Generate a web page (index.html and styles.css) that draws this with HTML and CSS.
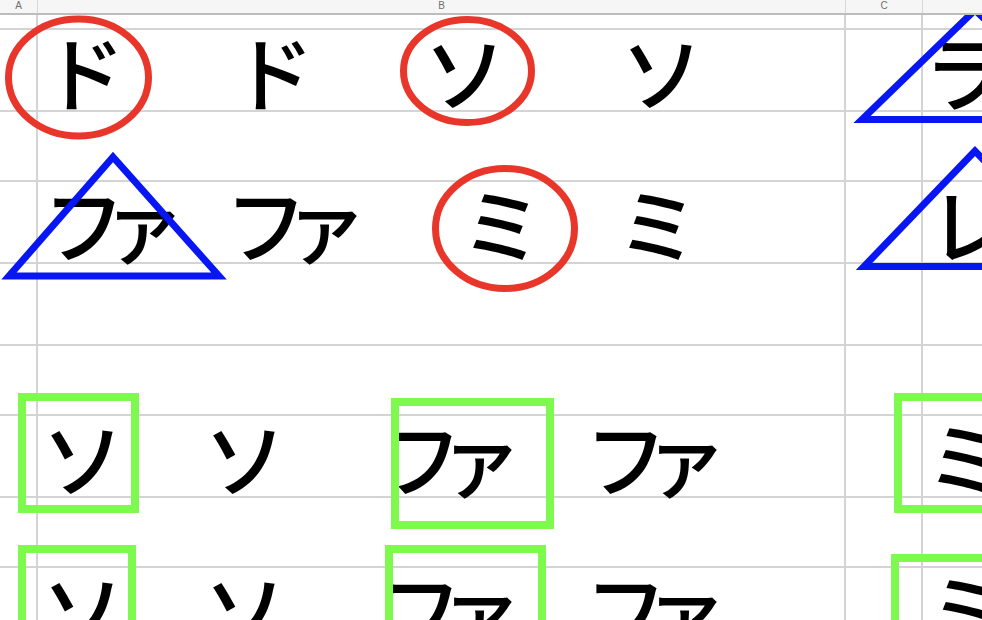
FILE: index.html
```html
<!DOCTYPE html>
<html lang="ja">
<head>
  <meta charset="UTF-8">
  <title>Sheet</title>
  <link rel="stylesheet" href="styles.css">
</head>
<body>

  <div class="sheet">
    <!-- column header -->
    <div class="head">
      <div class="hc">A</div>
      <div class="hc">B</div>
      <div class="hc">C</div>
      <div class="hc"></div>
    </div>

    <div class="row top">
      <span class="cell"></span><span class="cell"></span><span class="cell"></span><span class="cell"></span>
    </div>

    <div class="row tall">
      <span class="cell"></span><span class="cell"></span><span class="cell"></span><span class="cell"></span>
      <div class="line r1"><span>ド</span><span>ド</span><span>ソ</span><span>ソ</span><span>ラ</span></div>
    </div>

    <div class="row short">
      <span class="cell"></span><span class="cell"></span><span class="cell"></span><span class="cell"></span>
    </div>

    <div class="row tall">
      <span class="cell"></span><span class="cell"></span><span class="cell"></span><span class="cell"></span>
      <div class="line r3"><span class="fa">ファ</span><span class="fa">ファ</span><span>ミ</span><span>ミ</span><span>レ</span></div>
    </div>

    <div class="row tall">
      <span class="cell"></span><span class="cell"></span><span class="cell"></span><span class="cell"></span>
    </div>

    <div class="row short">
      <span class="cell"></span><span class="cell"></span><span class="cell"></span><span class="cell"></span>
    </div>

    <div class="row tall">
      <span class="cell"></span><span class="cell"></span><span class="cell"></span><span class="cell"></span>
      <div class="line r6"><span>ソ</span><span>ソ</span><span class="fa">ファ</span><span class="fa">ファ</span><span>ミ</span></div>
    </div>

    <div class="row short">
      <span class="cell"></span><span class="cell"></span><span class="cell"></span><span class="cell"></span>
    </div>

    <div class="row tall">
      <span class="cell"></span><span class="cell"></span><span class="cell"></span><span class="cell"></span>
      <div class="line r6"><span>ソ</span><span>ソ</span><span class="fa">ファ</span><span class="fa">ファ</span><span>ミ</span></div>
    </div>

    <!-- hand drawn marks over the cells -->
    <svg class="marks" width="982" height="620" viewBox="0 0 982 620">
      <g class="circle">
        <ellipse cx="78.5" cy="77.5" rx="70" ry="58.5"></ellipse>
        <ellipse cx="467.5" cy="71" rx="64" ry="51.5"></ellipse>
        <ellipse cx="505" cy="228.5" rx="69.5" ry="60"></ellipse>
      </g>
      <g class="tri">
        <polygon points="113,157 9,276 219,276"></polygon>
        <polygon points="975,10 862,119.5 1090,119.5"></polygon>
        <polygon points="975,151 864,266.5 1086,266.5"></polygon>
      </g>
      <g class="box">
        <rect x="22" y="397" width="113" height="112"></rect>
        <rect x="22" y="549" width="110" height="100"></rect>
        <rect x="395" y="402" width="155" height="123"></rect>
        <rect x="389" y="549" width="153" height="100"></rect>
        <rect x="898" y="397" width="200" height="112"></rect>
        <rect x="895" y="558" width="200" height="100"></rect>
      </g>
    </svg>
  </div>

</body>
</html>
```

FILE: styles.css
```css
body {
  margin: 0;
  background-color: #fff;
  font-family: "Noto Sans CJK JP", "Noto Sans", sans-serif;
}

.sheet {
  position: relative;
  width: 982px;
  height: 620px;
  overflow: hidden;
}

.head {
  position: relative;
  z-index: 2;
  display: grid;
  grid-template-columns: 38px 808px 77px 1fr;
  height: 15px;
  box-sizing: border-box;
  background-color: #f6f6f6;
  border-bottom: 2px solid #bcbcbc;
}

.hc {
  border-right: 1px solid #d6d6d6;
  text-align: center;
  font-family: "Liberation Sans", Arial, sans-serif;
  font-size: 10px;
  line-height: 12px;
  color: #6f6f6f;
}

.hc:last-child {
  border-right: none;
}

.row {
  display: grid;
  grid-template-columns: 38px 808px 77px 1fr;
  grid-template-rows: 1fr;
  box-sizing: border-box;
  border-bottom: 2px solid #d4d4d4;
}

.row.top {
  height: 15px;
}

.row.tall {
  height: 82px;
}

.row.short {
  height: 70px;
}

.cell {
  grid-row: 1;
  border-right: 2px solid #d4d4d4;
}

.cell:nth-child(1) { grid-column: 1; }
.cell:nth-child(2) { grid-column: 2; }
.cell:nth-child(3) { grid-column: 3; }
.cell:nth-child(4) { grid-column: 4; border-right: none; }

.line {
  grid-column: 1 / -1;
  grid-row: 1;
  min-width: 0;
  display: grid;
  font-size: 82px;
  font-weight: 500;
  line-height: 80px;
  color: #000;
  white-space: nowrap;
}

.line .fa {
  letter-spacing: -22px;
}

.line.r1 {
  padding-left: 43px;
  grid-template-columns: 189px 192px 197px 303px auto;
}

.line.r3 {
  padding-left: 43px;
  grid-template-columns: 182px 236px 156px 312px auto;
}

.line.r6 {
  padding-left: 42px;
  grid-template-columns: 162px 176px 205px 341px auto;
}

.marks {
  position: absolute;
  top: 0;
  left: 0;
  z-index: 1;
  pointer-events: none;
}

.circle ellipse {
  fill: none;
  stroke: #e8362a;
  stroke-width: 7;
}

.tri polygon {
  fill: none;
  stroke: #0716f2;
  stroke-width: 7;
  stroke-linejoin: miter;
}

.box rect {
  fill: none;
  stroke: #7ef94d;
  stroke-width: 8;
}
```
